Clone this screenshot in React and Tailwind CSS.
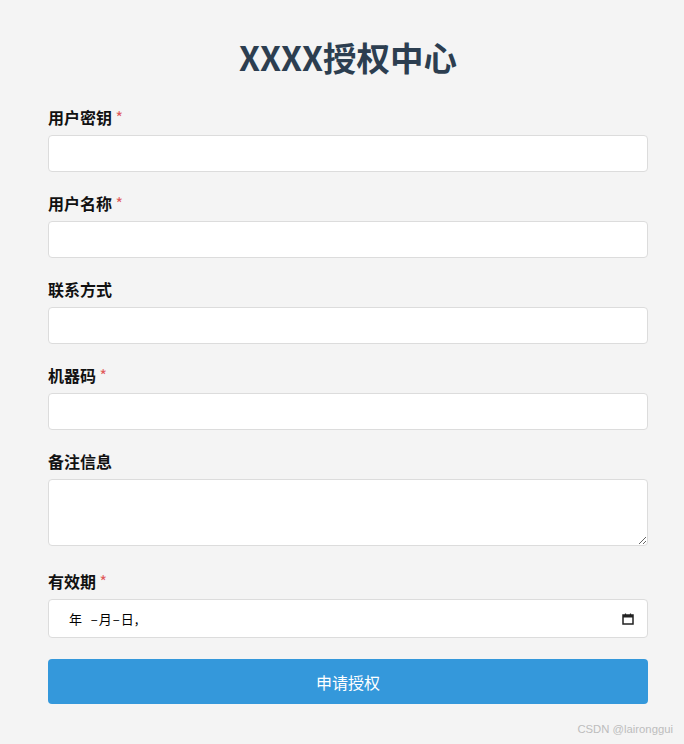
import { useState } from "react";

const FONT = { fontFamily: '"Microsoft YaHei", "Noto Sans CJK SC", "Noto Sans", sans-serif' };

const Field = ({ label, required, children, className = "mb-[19px]" }) => (
  <div className={className}>
    <label className="block text-[16px] font-bold leading-6 mb-[6px] text-[#111]">
      {label}
      {required && <span className="text-[#e05a5a] font-normal"> *</span>}
    </label>
    {children}
  </div>
);

const inputCls =
  "block w-full h-[37px] px-[10px] bg-white border border-[#dcdcdc] rounded-[4px] text-[14px] outline-none";

export default function App() {
  const [form, setForm] = useState({ key: "", name: "", contact: "", machine: "", note: "" });
  const set = (k) => (e) => setForm({ ...form, [k]: e.target.value });

  return (
    <div className="relative w-[684px] h-[744px] bg-[#f4f4f4] overflow-hidden" style={FONT}>
      <div className="ml-[48px] w-[600px] pt-[38px]">
        {/* title */}
        <h1 className="text-center text-[33.5px] leading-[38px] font-bold text-[#2c3e50] mb-[29px]">
          XXXX授权中心
        </h1>

        <Field label="用户密钥" required>
          <input className={inputCls} value={form.key} onChange={set("key")} />
        </Field>
        <Field label="用户名称" required>
          <input className={inputCls} value={form.name} onChange={set("name")} />
        </Field>
        <Field label="联系方式">
          <input className={inputCls} value={form.contact} onChange={set("contact")} />
        </Field>
        <Field label="机器码" required>
          <input className={inputCls} value={form.machine} onChange={set("machine")} />
        </Field>
        <Field label="备注信息" className="mb-[23px]">
          <textarea
            className="block w-full h-[67px] px-[10px] py-[8px] bg-white border border-[#dcdcdc] rounded-[4px] text-[14px] outline-none"
            value={form.note}
            onChange={set("note")}
          />
        </Field>
        <Field label="有效期" required className="mb-[21px]">
          {/* date input drawn by hand to keep the zh-CN placeholder */}
          <div className="flex items-center justify-between w-full h-[39px] pl-[20px] pr-[13px] bg-white border border-[#dcdcdc] rounded-[4px]">
            <span className="text-[13px] text-black tracking-[1px]">
              年&nbsp;&nbsp;–月–日,
            </span>
            <svg width="12" height="12" viewBox="0 0 12 12">
              <rect x="1" y="2" width="10" height="9" fill="none" stroke="#222" strokeWidth="1.5" />
              <rect x="1" y="2" width="10" height="2.5" fill="#222" />
              <line x1="3.5" y1="0.5" x2="3.5" y2="2.5" stroke="#222" strokeWidth="1.2" />
              <line x1="8.5" y1="0.5" x2="8.5" y2="2.5" stroke="#222" strokeWidth="1.2" />
            </svg>
          </div>
        </Field>

        <button className="w-full h-[45px] bg-[#3498db] text-white text-[16px] rounded-[4px]">
          申请授权
        </button>
      </div>

      <div
        className="absolute right-[11px] bottom-[6px] text-[11.3px] text-[#bdbdbd]"
        style={{ fontFamily: '"Liberation Sans", sans-serif' }}
      >
        CSDN @laironggui
      </div>
    </div>
  );
}
